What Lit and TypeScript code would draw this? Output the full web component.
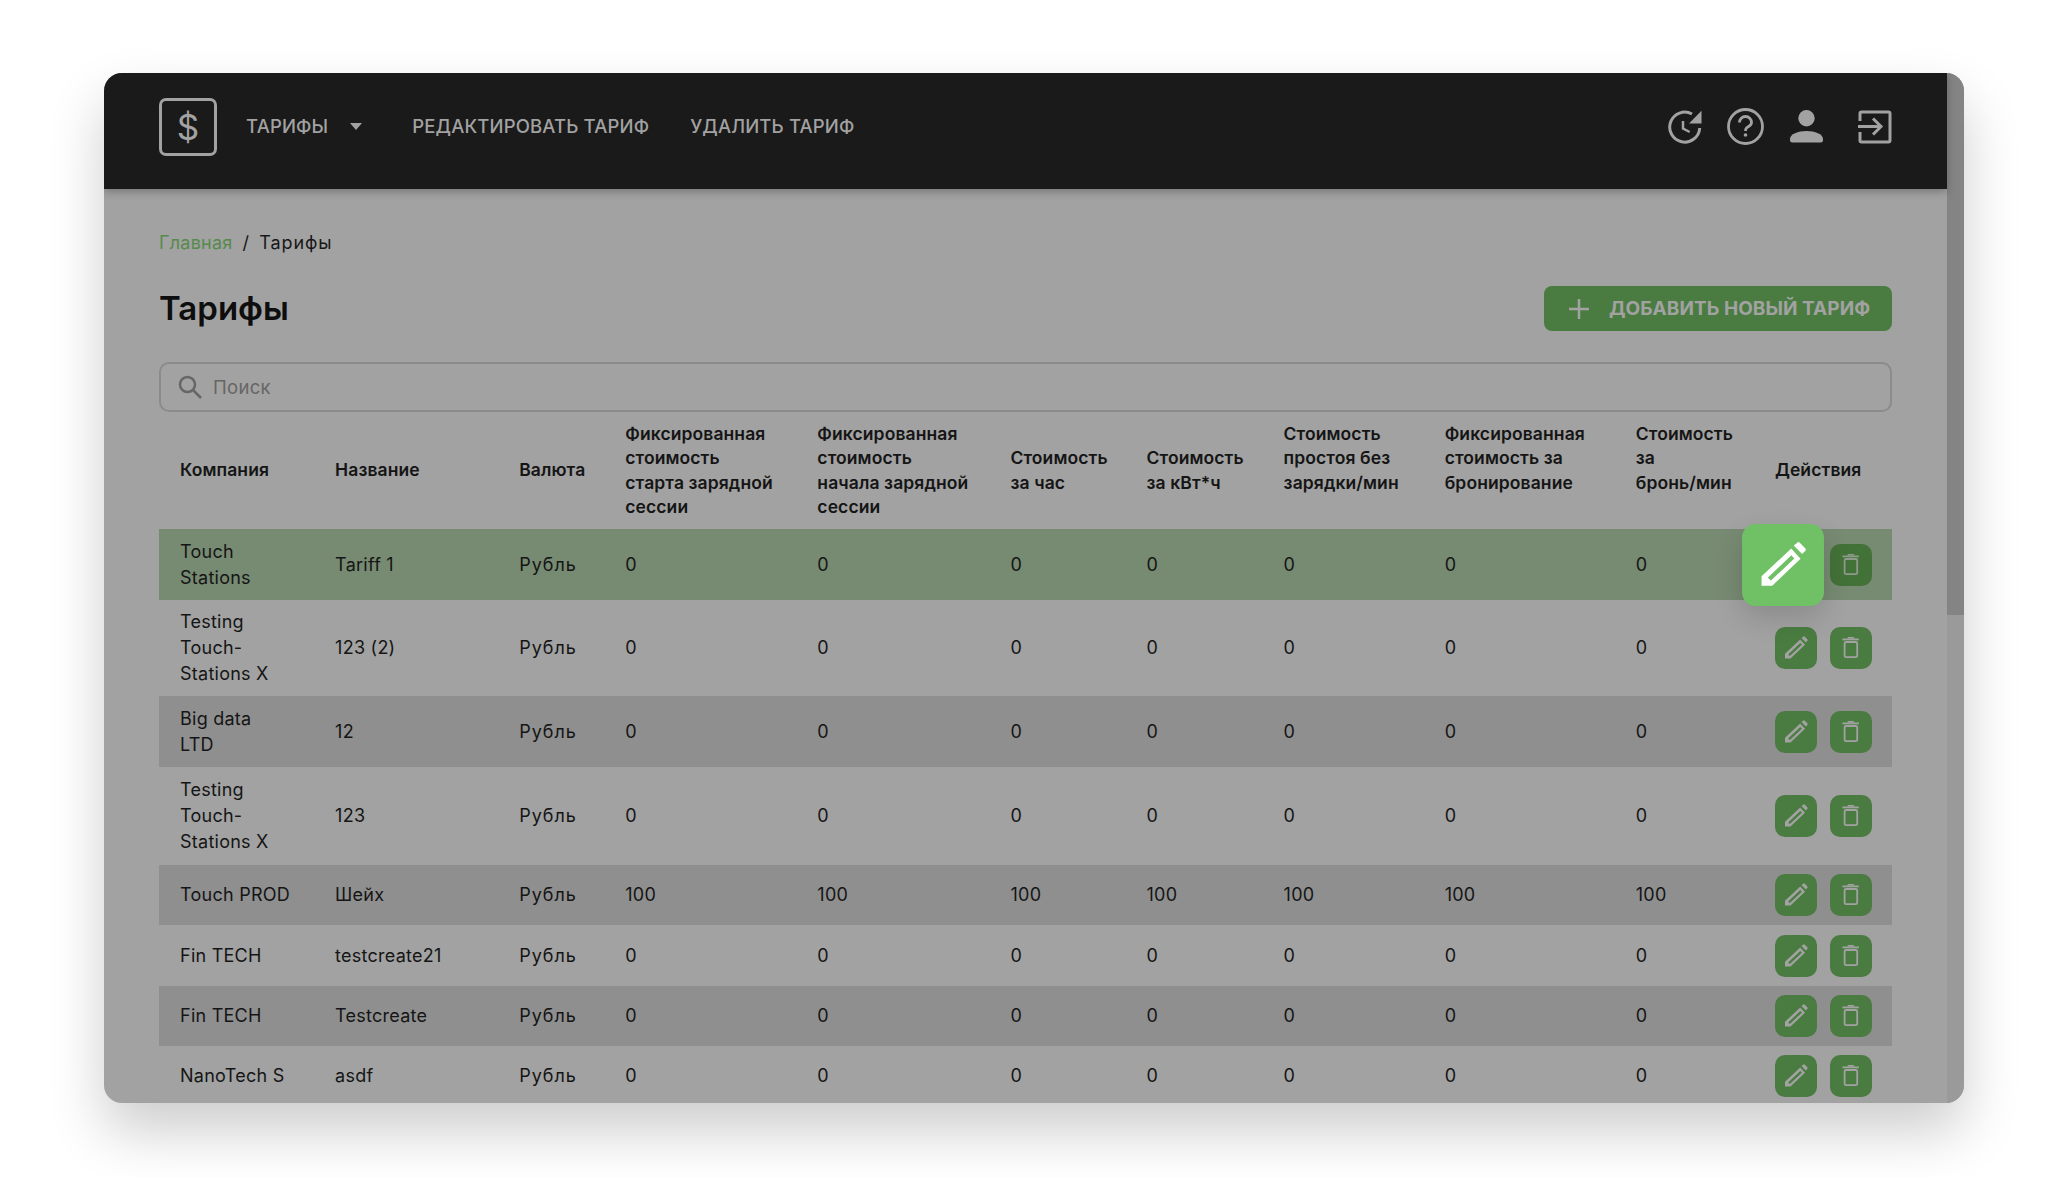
import { LitElement, html, css, svg } from "lit";
import { customElement } from "lit/decorators.js";

const PENCIL = svg`<path fill="currentColor" fill-rule="evenodd" d="M10 31.600v-4.800L25.200 12.600 30 17.800 15.500 31.600zM13.200 27.500l1.600 1.500 12-11.300-1.500-1.700z"/><path fill="currentColor" d="M26.500 11l2-1.600q.5-.4 1.100.2l2.900 3q.5.6-.1 1.200l-1.600 1.600z"/>`;
const TRASH = svg`<rect x="14.600" y="15" width="12.600" height="15.200" rx="1.500" fill="none" stroke="currentColor" stroke-width="1.800"/><path d="M12.400 12.400h16.400" fill="none" stroke="currentColor" stroke-width="1.800"/><path d="M17 11.500l1.200-1.600h5.400l1.200 1.600z" fill="currentColor"/>`;

const ROWS: [string[], string, string, string][] = [
  [["Touch", "Stations"], "Tariff 1", "Рубль", "0"],
  [["Testing", "Touch-", "Stations X"], "123 (2)", "Рубль", "0"],
  [["Big data", "LTD"], "12", "Рубль", "0"],
  [["Testing", "Touch-", "Stations X"], "123", "Рубль", "0"],
  [["Touch PROD"], "Шейх", "Рубль", "100"],
  [["Fin TECH"], "testcreate21", "Рубль", "0"],
  [["Fin TECH"], "Testcreate", "Рубль", "0"],
  [["NanoTech S"], "asdf", "Рубль", "0"],
];

const NB = "\u00a0";
const HEADS: string[][] = [
  ["Компания"],
  ["Название"],
  ["Валюта"],
  ["Фиксированная", "стоимость", "старта зарядной", "сессии"],
  ["Фиксированная", "стоимость", "начала зарядной", "сессии"],
  ["Стоимость", "за час"],
  ["Стоимость", "за кВт*ч"],
  ["Стоимость", "простоя без", "зарядки/мин", NB],
  ["Фиксированная", "стоимость за", "бронирование", NB],
  ["Стоимость", "за", "бронь/мин", NB],
  ["Действия"],
];

const HEIGHTS = [71, 96, 71, 98, 60, 61, 60, 60];
const COLS = [176, 184, 106, 192, 193, 136, 137, 161, 191, 139, 117];

@customElement("app-root")
export class AppRoot extends LitElement {
  static styles = css`
    :host {
      display: block;
      height: 1177px;
      background: #fff;
      font-family: Inter, "Noto Sans", sans-serif;
      overflow: hidden;
    }
    .page { padding: 73px 103px 0 104px; }
    .card {
      height: 1030px;
      display: flex;
      border-radius: 18px;
      overflow: hidden;
      background: #a2a2a2;
      box-shadow: 0 28px 56px rgba(0, 0, 0, 0.2);
    }
    .main { flex: 1; min-width: 0; display: flex; flex-direction: column; }
    .scrollbar { width: 17px; background: #9a9a9a; flex: none; }
    .thumb { height: 542px; background: #848484; }
    header {
      height: 116px;
      flex: none;
      background: #1a1a1a;
      display: flex;
      align-items: flex-start;
      padding: 25px 55px 0 55px;
      box-sizing: border-box;
      color: #a2a2a2;
      box-shadow: 0 3px 8px rgba(0, 0, 0, 0.25);
      position: relative;
    }
    .logo {
      width: 58px;
      height: 58px;
      box-sizing: border-box;
      border: 3px solid #a2a2a2;
      border-radius: 7px;
      display: flex;
      align-items: center;
      justify-content: center;
      font-size: 35px;
      font-weight: 400;
      flex: none;
    }
    nav {
      display: flex;
      align-items: center;
      height: 56px;
      margin-left: 29px;
      font-size: 18.5px;
      font-weight: 500;
      letter-spacing: 0.15px;
      line-height: 1;
      white-space: nowrap;
    }
    .caret {
      width: 0;
      height: 0;
      border-left: 6.5px solid transparent;
      border-right: 6.5px solid transparent;
      border-top: 7px solid #a2a2a2;
      margin: 0 50px 0 22px;
    }
    .edit-nav { margin-right: 41px; }
    .icons { margin-left: auto; display: flex; align-items: center; height: 57px; }
    .icons svg { display: block; }
    .i1 { width: 34px; height: 34px; margin-right: 25px; }
    .i2 { width: 37px; height: 37px; margin-right: 26px; }
    .i3 { width: 33px; height: 33px; margin-right: 35px; }
    .i4 { width: 34px; height: 34px; }
    .content { padding: 43px 55px 0 55px; flex: 1; min-height: 0; }
    .crumbs {
      display: flex;
      gap: 10px;
      font-size: 18px;
      letter-spacing: 0.25px;
      line-height: 22px;
      color: #181818;
    }
    .crumbs .home { color: #568a4c; }
    .crumbs .here { letter-spacing: 0.9px; }
    .title-row {
      display: flex;
      justify-content: space-between;
      align-items: center;
      margin-top: 32px;
    }
    h1 {
      margin: 0;
      font-size: 33px;
      line-height: 45px;
      font-weight: 600;
      color: #0e0e0e;
    }
    .add {
      width: 348px;
      height: 45px;
      box-sizing: border-box;
      padding-left: 24px;
      display: flex;
      align-items: center;
      background: #4a7c41;
      color: #a2a2a2;
      border-radius: 8px;
      font-size: 19px;
      letter-spacing: 0.05px;
      font-weight: 700;
      white-space: nowrap;
    }
    .add svg { width: 22px; height: 22px; margin-right: 19px; }
    .search {
      margin-top: 31px;
      height: 50px;
      box-sizing: border-box;
      border: 2px solid #8b8b8b;
      border-radius: 10px;
      display: flex;
      align-items: center;
      padding-left: 16px;
      color: #666;
      font-size: 18.5px;
      letter-spacing: 0.3px;
    }
    .search svg { width: 26px; height: 26px; margin-right: 10px; }
    table {
      width: 100%;
      table-layout: fixed;
      border-collapse: collapse;
      color: #151515;
    }
    th {
      height: 117px;
      padding: 0;
      text-align: left;
      font-size: 17.5px;
      font-weight: 600;
      letter-spacing: 0.1px;
      line-height: 24.5px;
      white-space: nowrap;
      vertical-align: middle;
    }
    td {
      padding: 0;
      font-size: 18px;
      letter-spacing: 0.25px;
      line-height: 26px;
      vertical-align: middle;
      white-space: nowrap;
    }
    th:first-child, td:first-child { padding-left: 21px; }
    td:nth-child(3) { letter-spacing: 1px; }
    tr.even { background: #8f8f8f; }
    tr.sel { background: #778a72; }
    .line { display: block; }
    .actions { display: flex; gap: 13px; }
    .btn {
      width: 42px;
      height: 42px;
      border-radius: 10px;
      background: #4a7c41;
      color: #a2a2a2;
      display: flex;
      flex: none;
    }
    .btn svg { width: 42px; height: 42px; display: block; }
    .sel .btn.del { background: #437238; color: #8e9a8b; }
    .btn.hover {
      background: #70c166;
      color: #fff;
      transform: translateX(-13px) scale(1.95);
      border-radius: 7px;
      box-shadow: 0 6px 14px rgba(0, 0, 0, 0.14);
    }
  `;

  render() {
    return html`<div class="page">
      <div class="card">
        <div class="main">
          <header>
            <div class="logo">$</div>
            <nav>
              <span>ТАРИФЫ</span><span class="caret"></span>
              <span class="edit-nav">РЕДАКТИРОВАТЬ ТАРИФ</span>
              <span>УДАЛИТЬ ТАРИФ</span>
            </nav>
            <div class="icons">
              <svg class="i1" viewBox="0 0 34 34" fill="none" stroke="currentColor" stroke-width="3">
                <path d="M24 4A15 15 0 1 0 31.700 18"/>
                <path d="M15 11v7.500l6.700 3.500" stroke-width="2.500"/>
                <path fill="currentColor" stroke="none" d="M33.500.7v12.800H21z"/>
              </svg>
              <svg class="i2" viewBox="0 0 37 37" fill="none" stroke="currentColor" stroke-width="2.800">
                <circle cx="18.500" cy="18.500" r="17"/>
                <path d="M12.500 14.500a6 6 0 0 1 12 0c0 3.500-3.500 4-5 5.500-.7.700-1 2-1 3" />
                <circle cx="18.500" cy="27" r="1.800" fill="currentColor" stroke="none"/>
              </svg>
              <svg class="i3" viewBox="0 0 33 33" fill="currentColor">
                <circle cx="16.500" cy="8.200" r="8.200"/>
                <path d="M0 29C0 24 8 21 16.500 21S33 24 33 29v1a2.500 2.500 0 0 1-2.500 2.500h-28A2.500 2.500 0 0 1 0 30z"/>
              </svg>
              <svg class="i4" viewBox="0 0 34 34" fill="none" stroke="currentColor" stroke-width="3">
                <path d="M2 11V3.500A1.500 1.500 0 0 1 3.500 2h27A1.500 1.500 0 0 1 32 3.500v27a1.500 1.500 0 0 1-1.500 1.500h-27A1.500 1.500 0 0 1 2 30.500V22"/>
                <path d="M0 16.500h23M15 8.500l8 8-8 8"/>
              </svg>
            </div>
          </header>
          <div class="content">
            <div class="crumbs"><span class="home">Главная</span><span>/</span><span class="here">Тарифы</span></div>
            <div class="title-row">
              <h1>Тарифы</h1>
              <div class="add">
                <svg viewBox="0 0 22 22" fill="none" stroke="currentColor" stroke-width="2.500"><path d="M11 1v20M1 11h20"/></svg>
                ДОБАВИТЬ НОВЫЙ ТАРИФ
              </div>
            </div>
            <div class="search">
              <svg viewBox="0 0 26 26" fill="none" stroke="#666" stroke-width="2.500">
                <circle cx="10.500" cy="10.500" r="7.500"/><path d="M16 16l8 8"/>
              </svg>
              Поиск
            </div>
            <table>
              <colgroup>${COLS.map((w) => html`<col style="width:${w}px" />`)}</colgroup>
              <thead>
                <tr>${HEADS.map((h) => html`<th>${h.map((l) => html`<span class="line">${l}</span>`)}</th>`)}</tr>
              </thead>
              <tbody>
                ${ROWS.map(
                  (r, i) => html`<tr class="${i === 0 ? "sel" : i % 2 === 0 ? "even" : ""}" style="height:${HEIGHTS[i]}px">
                    <td>${r[0].map((l) => html`<span class="line">${l}</span>`)}</td>
                    <td>${r[1]}</td>
                    <td>${r[2]}</td>
                    ${[0, 1, 2, 3, 4, 5, 6].map(() => html`<td>${r[3]}</td>`)}
                    <td>
                      <div class="actions">
                        <div class="btn ${i === 0 ? "hover" : ""}"><svg viewBox="0 0 42 42">${PENCIL}</svg></div>
                        <div class="btn del"><svg viewBox="0 0 42 42">${TRASH}</svg></div>
                      </div>
                    </td>
                  </tr>`
                )}
              </tbody>
            </table>
          </div>
        </div>
        <div class="scrollbar"><div class="thumb"></div></div>
      </div>
    </div>`;
  }
}
